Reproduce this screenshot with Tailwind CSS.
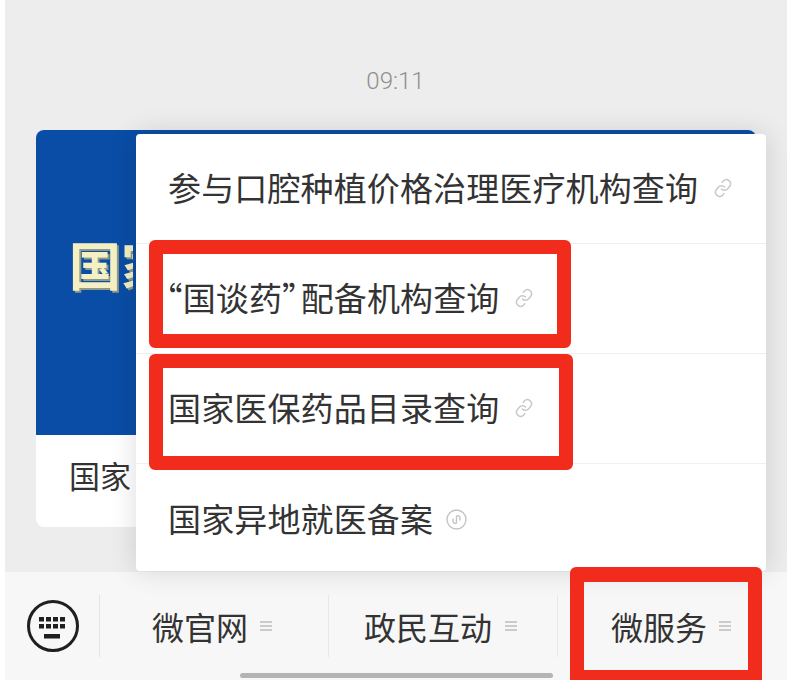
<!DOCTYPE html>
<html lang="zh-CN">
<head>
<meta charset="utf-8">
<title>微服务</title>
<script src="https://cdn.jsdelivr.net/npm/@tailwindcss/browser@4"></script>
</head>
<body class="bg-white font-['Noto_Sans_CJK_SC',sans-serif]">
<div class="relative ml-[5px] flex h-[680px] w-[782px] flex-col overflow-hidden bg-[#ededed] text-[#333333]">

  <!-- chat area -->
  <div class="h-[572px] shrink-0 pt-[68px]">
    <p class="pr-[1px] text-center font-['Roboto',sans-serif] text-[24px] font-light leading-[26px] text-[#8f8f8f]">09:11</p>
    <div class="ml-[31px] mt-[36px] h-[397px] w-[720px] overflow-hidden rounded-lg bg-white">
      <div class="h-[305px] bg-[#0a4da6] pl-[33px] pt-[103px]">
        <p class="w-[64px] overflow-hidden whitespace-nowrap text-[52px] font-bold leading-[62px] text-[#f4f0c4] [text-shadow:2px_2px_0_#8f9a86]">国家</p>
      </div>
      <p class="pl-[33px] pt-[18px] text-[31px] leading-[44px]">国家</p>
    </div>
  </div>

  <!-- bottom menu bar -->
  <div class="flex h-[108px] items-start bg-[#f7f7f7] pt-[23px]">
    <div class="flex h-[62px] w-[95px] items-center border-r border-[#e4e4e4] pl-[21px]">
      <svg width="54" height="54" viewBox="0 0 54 54" fill="#1f1f1f">
        <circle cx="27" cy="27" r="24.5" fill="none" stroke="#1f1f1f" stroke-width="3"/>
        <rect x="13" y="18" width="5" height="4.5"/><rect x="20" y="18" width="5" height="4.5"/><rect x="27" y="18" width="5" height="4.5"/><rect x="34" y="18" width="5" height="4.5"/>
        <rect x="13" y="25" width="5" height="4.5"/><rect x="20" y="25" width="5" height="4.5"/><rect x="27" y="25" width="5" height="4.5"/><rect x="34" y="25" width="5" height="4.5"/>
        <rect x="18" y="35" width="16" height="4.5"/>
      </svg>
    </div>
    <div class="flex h-[62px] w-[229px] items-center gap-[12px] border-r border-[#e8e8e8] pl-[52px] text-[32px]">
      <span>微官网</span>
      <svg width="12" height="12" viewBox="0 0 12 12" stroke="#bdbdbd" stroke-width="1.4"><path d="M0 2h12M0 6h12M0 10h12"/></svg>
    </div>
    <div class="flex h-[62px] w-[229px] items-center gap-[13px] border-r border-[#e8e8e8] pl-[35px] text-[32px]">
      <span>政民互动</span>
      <svg width="12" height="12" viewBox="0 0 12 12" stroke="#bdbdbd" stroke-width="1.4"><path d="M0 2h12M0 6h12M0 10h12"/></svg>
    </div>
    <div class="flex h-[62px] flex-1 items-center gap-[12px] pl-[53px] text-[32px]">
      <span>微服务</span>
      <svg width="12" height="12" viewBox="0 0 12 12" stroke="#bdbdbd" stroke-width="1.4"><path d="M0 2h12M0 6h12M0 10h12"/></svg>
    </div>
  </div>

  <!-- home indicator -->
  <div class="absolute left-[235px] top-[673px] h-[5px] w-[313px] rounded-full bg-[#b4b4b4]"></div>

  <!-- popup menu -->
  <div class="absolute left-[131px] top-[134px] h-[437px] w-[630px] divide-y divide-[#efefef] rounded-sm bg-white text-[33px] tracking-[0.13px] shadow-[0_0_28px_rgba(0,0,0,0.14)]">
    <div class="flex h-[110px] items-center gap-[15px] pb-[2px] pl-[32px]">
      <span>参与口腔种植价格治理医疗机构查询</span>
      <svg class="-rotate-6" width="20" height="20" viewBox="0 0 24 24" fill="none" stroke="#c9c9c9" stroke-width="1.8" stroke-linecap="round"><path d="M10 13a5 5 0 0 0 7.5.5l3-3a5 5 0 0 0-7-7l-1.7 1.7"/><path d="M14 11a5 5 0 0 0-7.500-.5l-3 3a5 5 0 0 0 7 7l1.700-1.700"/></svg>
    </div>
    <div class="flex h-[110px] items-center gap-[15px] pb-[2px] pl-[33px]">
      <span class="[font-feature-settings:'halt']"><span class="-ml-[3px]">“</span>国谈药<span class="mr-[2px]">”</span>配备机构查询</span>
      <svg class="-rotate-6" width="20" height="20" viewBox="0 0 24 24" fill="none" stroke="#c9c9c9" stroke-width="1.8" stroke-linecap="round"><path d="M10 13a5 5 0 0 0 7.5.5l3-3a5 5 0 0 0-7-7l-1.7 1.7"/><path d="M14 11a5 5 0 0 0-7.500-.5l-3 3a5 5 0 0 0 7 7l1.700-1.700"/></svg>
    </div>
    <div class="flex h-[110px] items-center gap-[15px] pb-[2px] pl-[32px]">
      <span>国家医保药品目录查询</span>
      <svg class="-rotate-6" width="20" height="20" viewBox="0 0 24 24" fill="none" stroke="#c9c9c9" stroke-width="1.8" stroke-linecap="round"><path d="M10 13a5 5 0 0 0 7.5.5l3-3a5 5 0 0 0-7-7l-1.7 1.7"/><path d="M14 11a5 5 0 0 0-7.500-.5l-3 3a5 5 0 0 0 7 7l1.700-1.700"/></svg>
    </div>
    <div class="flex h-[107px] items-center gap-[13px] pl-[32px] pt-[3px]">
      <span>国家异地就医备案</span>
      <svg width="21" height="21" viewBox="0 0 21 21" fill="none" stroke="#c4c4c4" stroke-width="1.4" stroke-linecap="round"><circle cx="10.500" cy="10.500" r="9.500"/><path d="M7 10v2.500a2 2 0 0 0 3.500 1.200V7.300A2 2 0 0 1 14 8.500V11"/></svg>
    </div>
  </div>

  <!-- red annotation boxes -->
  <div class="absolute left-[144px] top-[240px] h-[108px] w-[422px] rounded-md border-[14px] border-[#f22c1c]"></div>
  <div class="absolute left-[144px] top-[354px] h-[116px] w-[424px] rounded-md border-[14px] border-[#f22c1c]"></div>
  <div class="absolute left-[565px] top-[567px] h-[113px] w-[192px] rounded-t-md border-x-[14px] border-t-[15px] border-b-[10px] border-[#f22c1c]"></div>
</div>
</body>
</html>
